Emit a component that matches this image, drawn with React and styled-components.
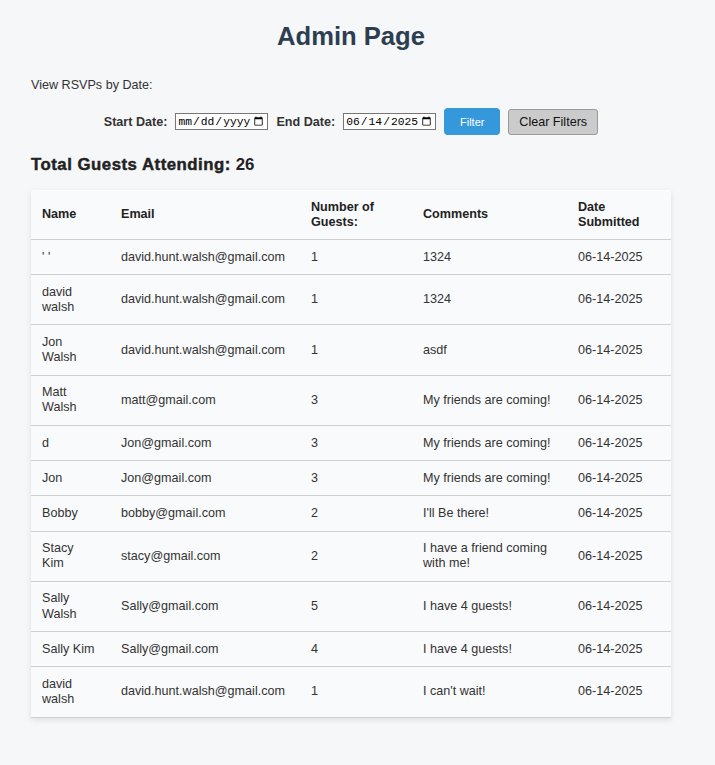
import React from "react";
import styled, { createGlobalStyle } from "styled-components";

const GlobalStyle = createGlobalStyle`
  html, body {
    margin: 0;
    padding: 0;
    background: #f6f7f9;
  }
  body {
    font-family: "Liberation Sans", Arial, sans-serif;
    color: #333;
  }
`;

const Page = styled.div`
  padding: 0 44px 40px 31px;
`;

const Container = styled.main`
  width: 640px;
  display: flex;
  flex-direction: column;
`;

const Title = styled.h1`
  margin: 22px 0 0;
  font-size: 25.6px;
  line-height: 29px;
  font-weight: 700;
  text-align: center;
  color: #2c3e50;
`;

const Caption = styled.p`
  margin: 27px 0 0;
  font-size: 12.6px;
  line-height: 15px;
  color: #333;
`;

const FilterRow = styled.div`
  margin-top: 15px;
  display: flex;
  align-items: center;
  justify-content: center;
  gap: 8px;
`;

const Label = styled.label`
  font-size: 12.6px;
  font-weight: 700;
  color: #333;
`;

const DateInput = styled.input`
  width: 93px;
  height: 17px;
  box-sizing: border-box;
  padding: 0 1px;
  border: 1px solid #767676;
  border-radius: 0;
  background: #fff;
  font-family: "Liberation Mono", "DejaVu Sans Mono", monospace;
  font-size: 11.3px;
  color: #000;
`;

const Button = styled.button`
  box-sizing: border-box;
  height: ${(p) => (p.$primary ? "27px" : "26px")};
  width: ${(p) => (p.$primary ? "56px" : "90px")};
  padding: 0;
  border: ${(p) => (p.$primary ? "none" : "1px solid #9a9a9a")};
  border-radius: ${(p) => (p.$primary ? "4px" : "3px")};
  background: ${(p) => (p.$primary ? "#3498db" : "#cbcbcb")};
  color: ${(p) => (p.$primary ? "#fff" : "#111")};
  font-family: "Liberation Sans", Arial, sans-serif;
  font-size: ${(p) => (p.$primary ? "11px" : "12.6px")};
  cursor: pointer;
`;

const Total = styled.h3`
  margin: 20px 0 0;
  font-size: 16.8px;
  line-height: 20px;
  font-weight: 700;
  letter-spacing: 0.15px;
  color: #222;
`;

const TotalLabel = styled.span`
  -webkit-text-stroke: 0.45px #222;
  letter-spacing: 0.5px;
`;

const Table = styled.table`
  margin-top: 15px;
  width: 640px;
  table-layout: fixed;
  border-collapse: collapse;
  background: #f9fafb;
  box-shadow: 0 2px 6px rgba(0, 0, 0, 0.1);
`;

const HeadCell = styled.th`
  padding: 9.5px 12px 9.5px 11px;
  text-align: left;
  vertical-align: middle;
  font-size: 12.6px;
  line-height: 15px;
  font-weight: 700;
  color: #222;
  border-bottom: 1px solid #cfcfcf;
`;

const Cell = styled.td`
  padding: 9.55px 12px 9.55px 11px;
  text-align: left;
  vertical-align: middle;
  font-size: 12.6px;
  line-height: 15.1px;
  color: #333;
  border-bottom: 1px solid #cfcfcf;
`;

const columns = [
  { label: "Name", width: 79 },
  { label: "Email", width: 190 },
  { label: "Number of Guests:", width: 112 },
  { label: "Comments", width: 155 },
  { label: "Date Submitted", width: 104 },
];

const rsvps = [
  ["' '", "david.hunt.walsh@gmail.com", 1, "1324"],
  ["david walsh", "david.hunt.walsh@gmail.com", 1, "1324"],
  ["Jon Walsh", "david.hunt.walsh@gmail.com", 1, "asdf"],
  ["Matt Walsh", "matt@gmail.com", 3, "My friends are coming!"],
  ["d", "Jon@gmail.com", 3, "My friends are coming!"],
  ["Jon", "Jon@gmail.com", 3, "My friends are coming!"],
  ["Bobby", "bobby@gmail.com", 2, "I'll Be there!"],
  ["Stacy Kim", "stacy@gmail.com", 2, "I have a friend coming with me!"],
  ["Sally Walsh", "Sally@gmail.com", 5, "I have 4 guests!"],
  ["Sally Kim", "Sally@gmail.com", 4, "I have 4 guests!"],
  ["david walsh", "david.hunt.walsh@gmail.com", 1, "I can't wait!"],
];

export default function App() {
  return (
    <>
      <GlobalStyle />
      <Page>
        <Container>
          <Title>Admin Page</Title>
          <Caption>View RSVPs by Date:</Caption>
          <FilterRow>
            <Label htmlFor="start">Start Date:</Label>
            <DateInput id="start" type="date" />
            <Label htmlFor="end">End Date:</Label>
            <DateInput id="end" type="date" defaultValue="2025-06-14" />
            <Button $primary>Filter</Button>
            <Button>Clear Filters</Button>
          </FilterRow>
          <Total>
            <TotalLabel>Total Guests Attending:</TotalLabel> 26
          </Total>
          <Table>
            <colgroup>
              {columns.map((c) => (
                <col key={c.label} style={{ width: c.width }} />
              ))}
            </colgroup>
            <thead>
              <tr>
                {columns.map((c) => (
                  <HeadCell key={c.label}>{c.label}</HeadCell>
                ))}
              </tr>
            </thead>
            <tbody>
              {rsvps.map((r, i) => (
                <tr key={i}>
                  <Cell>{r[0]}</Cell>
                  <Cell>{r[1]}</Cell>
                  <Cell>{r[2]}</Cell>
                  <Cell>{r[3]}</Cell>
                  <Cell>06-14-2025</Cell>
                </tr>
              ))}
            </tbody>
          </Table>
        </Container>
      </Page>
    </>
  );
}
